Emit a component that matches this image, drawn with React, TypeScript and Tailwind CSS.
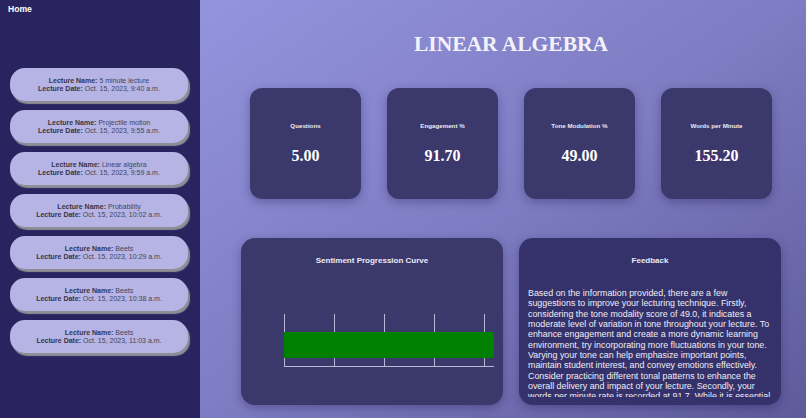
import React from "react";

const lectures = [
  { name: "5 minute lecture", date: "Oct. 15, 2023, 9:40 a.m." },
  { name: "Projectile motion", date: "Oct. 15, 2023, 9:55 a.m." },
  { name: "Linear algebra", date: "Oct. 15, 2023, 9:59 a.m." },
  { name: "Probability", date: "Oct. 15, 2023, 10:02 a.m." },
  { name: "Beets", date: "Oct. 15, 2023, 10:29 a.m." },
  { name: "Beets", date: "Oct. 15, 2023, 10:38 a.m." },
  { name: "Beets", date: "Oct. 15, 2023, 11:03 a.m." },
];

const stats = [
  { label: "Questions", value: "5.00" },
  { label: "Engagement %", value: "91.70" },
  { label: "Tone Modulation %", value: "49.00" },
  { label: "Words per Minute", value: "155.20" },
];

const feedback =
  "Based on the information provided, there are a few suggestions to improve your lecturing technique. Firstly, considering the tone modality score of 49.0, it indicates a moderate level of variation in tone throughout your lecture. To enhance engagement and create a more dynamic learning environment, try incorporating more fluctuations in your tone. Varying your tone can help emphasize important points, maintain student interest, and convey emotions effectively. Consider practicing different tonal patterns to enhance the overall delivery and impact of your lecture. Secondly, your words per minute rate is recorded at 91.7. While it is essential to maintain a steady pace, consider slowing down slightly during complex explanations so that students can follow along and absorb the material.";

export default function App() {
  return (
    <div
      className="flex w-[806px] h-[418px] overflow-hidden"
      style={{ fontFamily: '"Liberation Sans", Arial, sans-serif' }}
    >
      <aside className="w-[200px] h-full bg-[#29235f] flex flex-col shrink-0">
        <div className="pl-[8px] pt-[4px] text-[8.6px] leading-[10px] font-bold text-white">
          Home
        </div>
        <div className="mt-[54px] flex flex-col gap-[9px] pl-[10px]">
          {lectures.map((l, i) => (
            <div
              key={i}
              className="w-[178px] h-[33px] rounded-[15px] bg-[#b5b4e4] shadow-[2px_3px_1px_#8e8e96] flex flex-col items-center justify-center text-[7px] leading-[8px] text-[#45455a]"
            >
              <div>
                <span className="font-bold text-[#35354a]">Lecture Name:</span> {l.name}
              </div>
              <div>
                <span className="font-bold text-[#35354a]">Lecture Date:</span> {l.date}
              </div>
            </div>
          ))}
        </div>
      </aside>
      <main className="flex-1 h-full bg-gradient-to-br from-[#9394de] via-[#7e7cc2] to-[#5e5b9b] pl-[16px] flex flex-col items-center">
        <h1
          className="pt-[30px] text-[21.5px] leading-[28px] font-bold text-[#f2f2f8]"
          style={{ fontFamily: '"Liberation Serif", "Times New Roman", serif' }}
        >
          LINEAR ALGEBRA
        </h1>
        <div className="mt-[30px] flex gap-[26px]">
          {stats.map((s) => (
            <div
              key={s.label}
              className="w-[111px] h-[111px] rounded-[12px] bg-[#3b386b] shadow-[0_3px_10px_rgba(30,25,80,0.35)] flex flex-col items-center justify-center gap-[17px]"
            >
              <div className="text-[6.2px] leading-[8px] font-bold text-[#ececf4]">{s.label}</div>
              <div
                className="text-[16px] leading-[18px] font-bold text-white"
                style={{ fontFamily: '"Liberation Serif", "Times New Roman", serif' }}
              >
                {s.value}
              </div>
            </div>
          ))}
        </div>
        <div className="mt-[39px] flex gap-[16px]">
          <div className="w-[262px] h-[167px] rounded-[14px] bg-[#3b386b] shadow-[0_3px_10px_rgba(30,25,80,0.35)] flex flex-col items-center pt-[18px]">
            <div className="text-[8px] leading-[9px] font-bold text-[#ececf4]">
              Sentiment Progression Curve
            </div>
            <svg width="262" height="80" className="mt-[35px] block" viewBox="0 0 262 80">
              {[43, 93, 143, 193, 243].map((x) => (
                <line key={x} x1={x + 0.5} y1={14} x2={x + 0.5} y2={66} stroke="#b9b8d8" strokeWidth="1" />
              ))}
              <rect x="43" y="32" width="210" height="26" fill="#008000" />
              <line x1="43" y1="66.5" x2="253" y2="66.5" stroke="#b9b8d8" strokeWidth="1" />
            </svg>
          </div>
          <div className="w-[262px] h-[167px] rounded-[14px] bg-[#35316a] shadow-[0_3px_10px_rgba(30,25,80,0.35)] flex flex-col pt-[18px]">
            <div className="text-[8px] leading-[9px] font-bold text-[#ececf4] text-center">
              Feedback
            </div>
            <div className="mt-[23px] px-[9px] h-[109px] overflow-hidden text-[8.9px] leading-[10.33px] text-[#eeeef6]">
              {feedback}
            </div>
          </div>
        </div>
      </main>
    </div>
  );
}
